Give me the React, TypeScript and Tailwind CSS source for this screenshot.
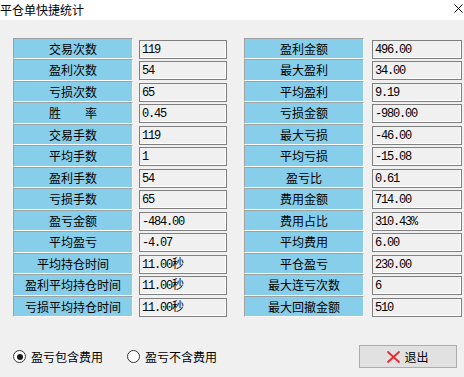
import { useState } from "react";

const left: [string, string][] = [
  ["交易次数", "119"],
  ["盈利次数", "54"],
  ["亏损次数", "65"],
  ["胜　　率", "0.45"],
  ["交易手数", "119"],
  ["平均手数", "1"],
  ["盈利手数", "54"],
  ["亏损手数", "65"],
  ["盈亏金额", "-484.00"],
  ["平均盈亏", "-4.07"],
  ["平均持仓时间", "11.00秒"],
  ["盈利平均持仓时间", "11.00秒"],
  ["亏损平均持仓时间", "11.00秒"],
];

const right: [string, string][] = [
  ["盈利金额", "496.00"],
  ["最大盈利", "34.00"],
  ["平均盈利", "9.19"],
  ["亏损金额", "-980.00"],
  ["最大亏损", "-46.00"],
  ["平均亏损", "-15.08"],
  ["盈亏比", "0.61"],
  ["费用金额", "714.00"],
  ["费用占比", "310.43%"],
  ["平均费用", "6.00"],
  ["平仓盈亏", "230.00"],
  ["最大连亏次数", "6"],
  ["最大回撤金额", "510"],
];

function StatRow({ label, value, tall, wide }: { label: string; value: string; tall: boolean; wide?: boolean }) {
  return (
    <div className={`flex ${tall ? "h-[22px]" : "h-[21px]"}`}>
      <div className="w-[120px] h-full flex items-center justify-center bg-[#87ceeb] border-t border-l border-t-[#a0a0a0] border-l-[#a0a0a0] border-b border-r border-b-white border-r-white text-[12px] text-black">
        {label}
      </div>
      <div
        className={`${wide ? "ml-[8px] w-[90px]" : "ml-[6px] w-[88px]"} mt-[2px] h-[19px] border border-[#7f7f7f] shadow-[inset_-1px_-1px_0_#ffffff] bg-[#f0f0f0] flex items-center pl-[2px] text-[12px] tracking-[-1.2px] text-black`}
        style={{ fontFamily: '"Liberation Mono", "Noto Sans CJK SC", monospace' }}
      >
        {value}
      </div>
    </div>
  );
}

function Radio({ checked, label, onClick }: { checked: boolean; label: string; onClick: () => void }) {
  return (
    <button onClick={onClick} className="flex items-center gap-[5px] text-[12px] text-black">
      <span className="w-[13px] h-[13px] rounded-full border border-[#333] bg-white flex items-center justify-center">
        {checked && <span className="w-[6px] h-[6px] rounded-full bg-[#1a1a1a]" />}
      </span>
      {label}
    </button>
  );
}

export default function App() {
  const [incFee, setIncFee] = useState(true);

  return (
    <div
      className="w-[464px] h-[377px] bg-[#f0f0f0] flex flex-col overflow-hidden"
      style={{ fontFamily: '"Noto Sans CJK SC", "Noto Sans", sans-serif' }}
    >
      {/* 标题栏 */}
      <div className="h-[20px] bg-white flex items-center justify-between shrink-0">
        <span className="text-[12px] text-black leading-none">平仓单快捷统计</span>
        <svg width="9" height="9" viewBox="0 0 9 9" className="mr-[1px] mt-[-4px]">
          <path d="M0.5 0.5 L8.5 8.5 M8.5 0.5 L0.5 8.5" stroke="#000" strokeWidth="1" />
        </svg>
      </div>

      {/* 统计表 */}
      <div className="flex pl-[13px] pt-[18px]">
        <div className="flex flex-col">
          {left.map(([l, v], i) => (
            <StatRow key={l} label={l} value={v} tall={i % 2 === 1} />
          ))}
        </div>
        <div className="flex flex-col ml-[17px]">
          {right.map(([l, v], i) => (
            <StatRow key={l} label={l} value={v} tall={i % 2 === 1} wide />
          ))}
        </div>
      </div>

      {/* 底部 */}
      <div className="flex items-center pl-[13px] pr-[7px] mt-[28px]">
        <Radio checked={incFee} label="盈亏包含费用" onClick={() => setIncFee(true)} />
        <div className="ml-[24px]">
          <Radio checked={!incFee} label="盈亏不含费用" onClick={() => setIncFee(false)} />
        </div>
        <button className="ml-auto w-[98px] h-[23px] bg-[#e1e1e1] border border-[#adadad] flex items-center justify-center gap-[4px] text-[12px] text-black">
          <svg width="13" height="12" viewBox="0 0 13 12">
            <path d="M1 1 L12 11 M12 1 L1 11" stroke="#e8262a" strokeWidth="1.8" strokeLinecap="round" />
          </svg>
          退出
        </button>
      </div>
    </div>
  );
}
